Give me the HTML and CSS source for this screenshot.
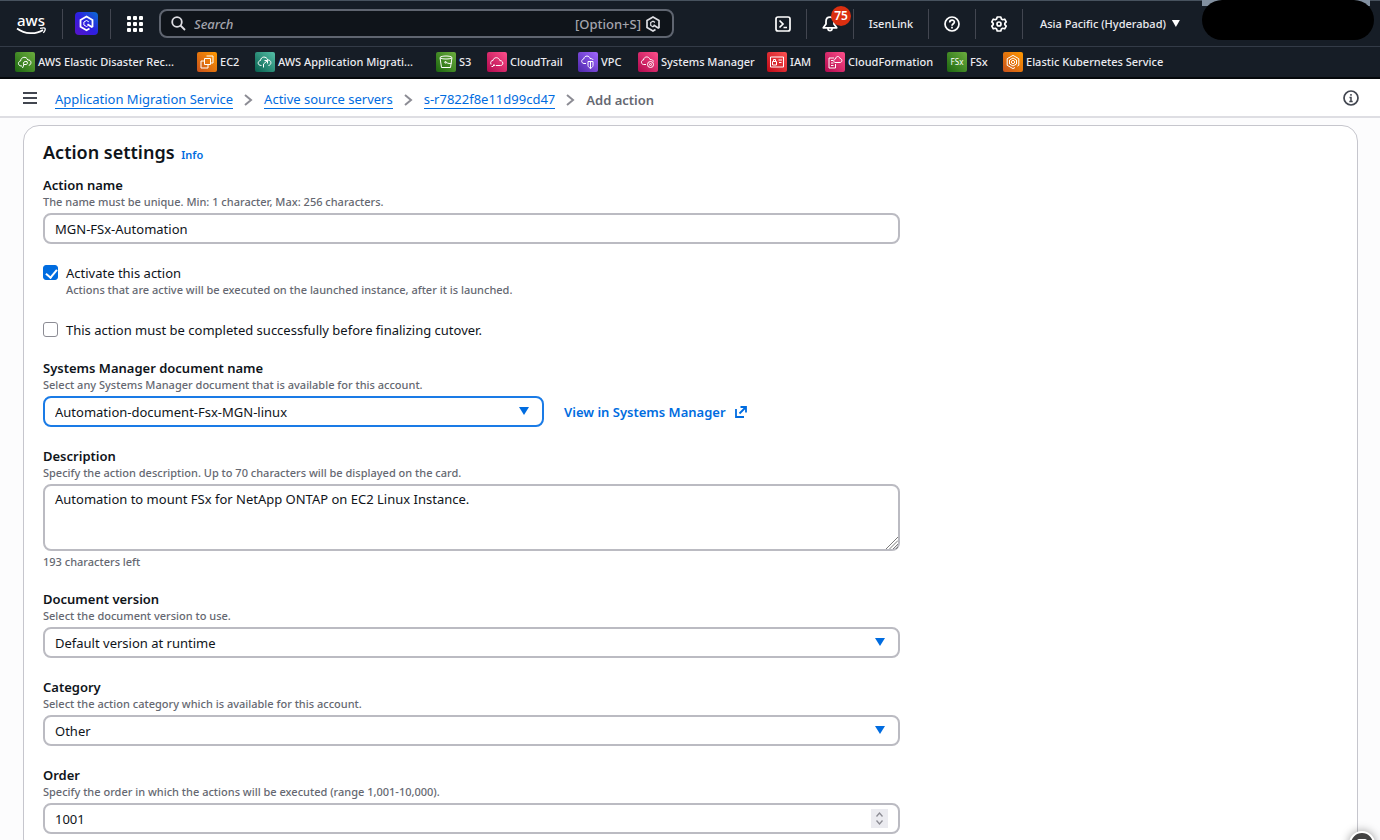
FILE: index.html
```html
<!DOCTYPE html>
<html lang="en">
<head>
    <meta charset="UTF-8">
    <meta name="viewport" content="width=device-width, initial-scale=1.0">
    <title>Add action | Application Migration Service</title>
    <link rel="stylesheet" href="styles.css">
</head>
<body>
    <header>
        <!-- Top navigation -->
        <div class="topnav">
            <a href="#" class="logo" aria-label="AWS home">
                <svg width="32" height="30" viewBox="0 0 32 30">
                    <text x="15" y="17" text-anchor="middle" class="logo-text">aws</text>
                    <path d="M1 19.500C9 25.500 20 25.500 27 21" fill="none" stroke="#fff" stroke-width="1.700"/>
                    <path d="M24 19.300c2.500-.6 4.600-.6 5 0 .4.600-.2 2.700-1.700 4.500" fill="none" stroke="#fff" stroke-width="1.300"/>
                </svg>
            </a>
            <a href="#" class="nav-cell assistant" aria-label="Amazon Q">
                <svg width="23" height="23" viewBox="0 0 23 23">
                    <defs>
                        <linearGradient id="q" x1="1" y1="0" x2="0" y2="1">
                            <stop offset="0" stop-color="#0a6fd0"/>
                            <stop offset=".5" stop-color="#2d1fe0"/>
                            <stop offset="1" stop-color="#5a12c8"/>
                        </linearGradient>
                    </defs>
                    <rect width="23" height="23" rx="4" fill="url(#q)"/>
                    <path d="M14.500 16.500l-3 1.700L5.500 14.700V8l6-3.500 6 3.500v6.500l-.8.5-4.200-2.800" fill="none" stroke="#fff" stroke-width="1.800"/>
                    <path d="M13.800 9.800l-2.300-1.300-2.600 1.500v3l2.600 1.500 1.200-.6" fill="none" stroke="#fff" stroke-width="1"/>
                </svg>
            </a>
            <button class="services" aria-label="Services">
                <svg width="16" height="16" viewBox="0 0 16 16" fill="#fff">
                    <rect x="0" y="0" width="4" height="4" rx="1"/><rect x="6" y="0" width="4" height="4" rx="1"/><rect x="12" y="0" width="4" height="4" rx="1"/>
                    <rect x="0" y="6" width="4" height="4" rx="1"/><rect x="6" y="6" width="4" height="4" rx="1"/><rect x="12" y="6" width="4" height="4" rx="1"/>
                    <rect x="0" y="12" width="4" height="4" rx="1"/><rect x="6" y="12" width="4" height="4" rx="1"/><rect x="12" y="12" width="4" height="4" rx="1"/>
                </svg>
            </button>
            <div class="search">
                <svg width="15" height="15" viewBox="0 0 15 15" fill="none" stroke="#dedee3" stroke-width="1.800">
                    <circle cx="6" cy="6" r="4.800"/><path d="M9.500 9.500l4.500 4.500"/>
                </svg>
                <input type="text" placeholder="Search" aria-label="Search">
                <span class="shortcut">[Option+S]</span>
                <svg width="14" height="16" viewBox="0 0 14 16" fill="none" stroke="#dedee3">
                    <path d="M9.500 13.500L7 15 1 11.500v-7L7 1l6 3.500v7l-.8.5L7.500 9" stroke-width="1.700"/>
                    <path d="M9 6.400L7 5.300 4.700 6.600v2.800L7 10.700l1-.6" stroke-width="1.200"/>
                </svg>
            </div>
            <div class="nav-right">
                <button class="nav-cell" aria-label="CloudShell">
                    <svg width="16" height="16" viewBox="0 0 16 16" fill="none" stroke="#fff" stroke-width="1.700">
                        <rect x="1" y="1" width="14" height="14" rx="2"/><path d="M4.500 4.500L8 8l-3.500 3.500M8.500 11.500H12"/>
                    </svg>
                </button>
                <button class="nav-cell" aria-label="Notifications">
                    <svg width="16" height="16" viewBox="0 0 16 16" fill="none" stroke="#fff" stroke-width="1.800" stroke-linejoin="round">
                        <path d="M8 1.200C5.500 1.200 4 3 4 5.500V8L1.300 11.800h13.400L12 8V5.500C12 3 10.500 1.200 8 1.200zM5.800 12c.2 3.600 4.200 3.600 4.400 0"/>
                    </svg>
                    <span class="badge">75</span>
                </button>
                <button class="nav-cell user">IsenLink</button>
                <button class="nav-cell" aria-label="Help">
                    <svg width="16" height="16" viewBox="0 0 16 16" fill="none" stroke="#fff" stroke-width="1.700">
                        <circle cx="8" cy="8" r="7"/><path d="M5.700 6.500C5.700 3.300 10.400 3.500 10.400 6.100 10.400 7.800 8 7.700 8 9.800M8 10.800v1.700"/>
                    </svg>
                </button>
                <button class="nav-cell" aria-label="Settings">
                    <svg width="16" height="16" viewBox="0 0 16 16" fill="none" stroke="#fff" stroke-width="1.700" stroke-linejoin="round">
                        <path d="M6.200 1h3.600l.6 2 1.300.7 2-.5 1.500 2.600L13.800 7.300v1.400l1.400 1.500-1.500 2.600-2-.5-1.300.7-.6 2H6.200l-.6-2-1.300-.7-2 .5L.8 10.200l1.400-1.500V7.300L.8 5.800l1.500-2.600 2 .5L5.600 3z"/>
                        <circle cx="8" cy="8" r="2"/>
                    </svg>
                </button>
                <button class="nav-cell region">Asia Pacific (Hyderabad) <i class="caret"></i></button>
                <div class="account"></div>
            </div>
        </div>

        <!-- Favorite services -->
        <nav class="favorites">
            <a href="#">
                <svg class="green" viewBox="0 0 20 20"><path d="M7 14H6c-3.500-.5-3.200-4.600-.4-5C6 4.500 11.500 4 12.800 8c3.600-.5 4.400 4.500 1 5.400M12 9.500c-3-.5-4 1-3.500 3h3c1 0 1-3 .5-3zM9 12.500L7.500 16"/></svg>
                AWS Elastic Disaster Rec...
            </a>
            <a href="#">
                <svg class="orange" viewBox="0 0 20 20"><path d="M7.500 6.500h6v6h-6zM9.500 4H16v7h-2.500M7.500 9H4v7h7v-3.500"/></svg>
                EC2
            </a>
            <a href="#">
                <svg class="teal" viewBox="0 0 20 20"><path d="M6.500 13.500c-4.500 0-4-4.500-1-5C6 4 11.500 4 12.800 8c3.800-.3 4.200 5 .7 5.500M8.500 15.500V12l4-3.500M9.500 8.500h3v3"/></svg>
                AWS Application Migrati...
            </a>
            <a href="#">
                <svg class="green" viewBox="0 0 20 20"><path d="M4 5.500l1.500 10h9l1.500-10M4 5.500c1-2 11-2 12 0-1 2-11 2-12 0M9.500 10.300c2 1 6.500 2 6 .5"/><circle cx="9.500" cy="10.300" r=".8"/></svg>
                S3
            </a>
            <a href="#">
                <svg class="pink" viewBox="0 0 20 20"><path d="M4 12.500C3 9.500 4.500 8.500 6 8.500 6.800 4.500 12 5 12.800 8.500c3.700 0 4.200 5 .7 5H9M4.500 14.500H6l1-2 1 1.500"/></svg>
                CloudTrail
            </a>
            <a href="#">
                <svg class="purple" viewBox="0 0 20 20"><path d="M8 11.500H6c-3-.3-3-4-.3-4.500C6.500 3 11.500 3.300 12 6.500c2.500 0 3 1 3 1.500M10 9.500h5v4c0 1.500-2.500 3-2.500 3s-2.500-1.500-2.500-3zM12.500 9.500v7"/></svg>
                VPC
            </a>
            <a href="#">
                <svg class="pink" viewBox="0 0 20 20"><path d="M8 12.500H5.500c-3-.5-2.500-4.500 0-4.500C6 4 11 4 12 7.500c2.500 0 3.300 1 3.500 2"/><circle cx="12.500" cy="12.500" r="3"/><circle cx="12.500" cy="12.500" r="1"/></svg>
                Systems Manager
            </a>
            <a href="#">
                <svg class="red" viewBox="0 0 20 20"><path d="M3.500 5h13v10h-13zM5.500 9.500h4V13h-4zM6.500 9.500V7.500h2v2M11.500 8H15M12 10.500h2.500"/></svg>
                IAM
            </a>
            <a href="#">
                <svg class="pink" viewBox="0 0 20 20"><path d="M9 6H4v10h6.500v-4M6 8.500h2M6 11h2.500M6 13.500h2.500M10 10.500c-2-.5-1.500-3.500.5-3.500C11 3.500 14.500 4 15 6.500c2.500 0 2.500 4 0 4z"/></svg>
                CloudFormation
            </a>
            <a href="#">
                <svg class="green" viewBox="0 0 20 20"><text x="10" y="13" text-anchor="middle">FSx</text></svg>
                FSx
            </a>
            <a href="#">
                <svg class="orange" viewBox="0 0 20 20"><path d="M12 15.500L10 16.600 4.200 13.300V6.700L10 3.400l5.800 3.300v6.600l-1.300.8M10 6l3.500 2v4L10 14l-3.500-2V8zM10 8.300L8.500 9.200v1.800l1.500.9 1.500-.9V9.200z"/></svg>
                Elastic Kubernetes Service
            </a>
        </nav>
    </header>

    <!-- Breadcrumb bar -->
    <div class="crumb-bar">
        <button class="menu" aria-label="Open navigation">
            <svg width="14" height="12" viewBox="0 0 14 12" stroke="#424650" stroke-width="2"><path d="M0 1h14M0 6h14M0 11h14"/></svg>
        </button>
        <nav class="crumbs">
            <a href="#">Application Migration Service</a>
            <svg width="9" height="12" viewBox="0 0 9 12"><path d="M1 1l6 5-6 5"/></svg>
            <a href="#">Active source servers</a>
            <svg width="9" height="12" viewBox="0 0 9 12"><path d="M1 1l6 5-6 5"/></svg>
            <a href="#">s-r7822f8e11d99cd47</a>
            <svg width="9" height="12" viewBox="0 0 9 12"><path d="M1 1l6 5-6 5"/></svg>
            <span>Add action</span>
        </nav>
        <button class="info-toggle" aria-label="Open help panel">
            <svg width="16" height="16" viewBox="0 0 16 16" fill="none" stroke="#424650" stroke-width="1.700"><circle cx="8" cy="8" r="7"/><path d="M8 4v1.700M6.500 7.500H8V11.500M6.300 11.500h3.400" stroke-width="1.500"/></svg>
        </button>
    </div>

    <main>
        <form class="card">
            <h2>Action settings <a href="#">Info</a></h2>

            <div class="field">
                <label for="action-name">Action name</label>
                <p class="hint">The name must be unique. Min: 1 character, Max: 256 characters.</p>
                <input type="text" id="action-name" class="control" value="MGN-FSx-Automation">
            </div>

            <div class="check">
                <input type="checkbox" id="activate" checked>
                <div>
                    <label for="activate">Activate this action</label>
                    <p class="hint">Actions that are active will be executed on the launched instance, after it is launched.</p>
                </div>
            </div>

            <div class="check">
                <input type="checkbox" id="must-complete">
                <label for="must-complete">This action must be completed successfully before finalizing cutover.</label>
            </div>

            <div class="field">
                <label for="document">Systems Manager document name</label>
                <p class="hint">Select any Systems Manager document that is available for this account.</p>
                <div class="document-row">
                    <div class="select focused">
                        <select id="document" class="control">
                            <option>Automation-document-Fsx-MGN-linux</option>
                        </select>
                    </div>
                    <a href="#" class="external">View in Systems Manager
                        <svg width="12" height="12" viewBox="0 0 12 12" fill="none" stroke="#006ce0" stroke-width="1.800"><path d="M1 3v8h8M5.500 1H11v5.500M11 1L4.500 7.500"/></svg>
                    </a>
                </div>
            </div>

            <div class="field">
                <label for="description">Description</label>
                <p class="hint">Specify the action description. Up to 70 characters will be displayed on the card.</p>
                <div class="area">
                    <textarea id="description" class="control">Automation to mount FSx for NetApp ONTAP on EC2 Linux Instance.</textarea>
                    <svg width="12" height="12" viewBox="0 0 12 12" stroke="#7b7b7b"><path d="M0 12L12 0M3.500 12L12 3.500M7 12l5-5M10 12l2-2"/></svg>
                </div>
                <p class="hint">193 characters left</p>
            </div>

            <div class="field">
                <label for="version">Document version</label>
                <p class="hint">Select the document version to use.</p>
                <div class="select">
                    <select id="version" class="control">
                        <option>Default version at runtime</option>
                    </select>
                </div>
            </div>

            <div class="field">
                <label for="category">Category</label>
                <p class="hint">Select the action category which is available for this account.</p>
                <div class="select">
                    <select id="category" class="control">
                        <option>Other</option>
                    </select>
                </div>
            </div>

            <div class="field">
                <label for="order">Order</label>
                <p class="hint">Specify the order in which the actions will be executed (range 1,001-10,000).</p>
                <div class="number">
                    <input type="number" id="order" class="control" min="1001" max="10000" value="1001">
                    <svg width="17" height="19" viewBox="0 0 17 19"><rect width="17" height="19" fill="#ebebf0"/><path d="M5.500 7.500l3-3.500 3 3.500M5.500 11.500l3 3.500 3-3.500" fill="none" stroke="#8c8c94" stroke-width="1.300"/></svg>
                </div>
            </div>
        </form>
    </main>

    <button class="capture" aria-label="Recorder">
        <svg width="10" height="10" viewBox="0 0 10 10"><rect width="10" height="10" rx="2" fill="#fff"/></svg>
    </button>
</body>
</html>
```
FILE: styles.css
```css
* {
    box-sizing: border-box;
}

body {
    margin: 0;
    height: 100vh;
    display: flex;
    flex-direction: column;
    overflow: hidden;
    background-color: #fcfcfd;
    color: #0f141a;
    font-family: "Noto Sans", "Open Sans", sans-serif;
    font-size: 13px;
    line-height: 18px;
}

a {
    color: #006ce0;
    text-decoration: none;
}

button {
    padding: 0;
    border: none;
    background: none;
    font: inherit;
    color: inherit;
    cursor: pointer;
}

svg {
    display: block;
    flex: none;
}

/* Header */
header {
    background-color: #161d26;
    border-top: 1px solid #47525e;
    border-bottom: 2px solid #05080b;
    color: #ebebf0;
    font-size: 11px;
    font-weight: 500;
}

.topnav {
    display: flex;
    align-items: center;
    height: 46px;
    padding-left: 16px;
    border-bottom: 1px solid #333b47;
}

.logo {
    width: 46px;
}

.logo-text {
    fill: #fff;
    font-size: 15px;
    font-weight: 500;
}

.nav-cell {
    position: relative;
    display: flex;
    align-items: center;
    justify-content: center;
    width: 47px;
    height: 30px;
    border-right: 1px solid #424650;
}

.assistant {
    width: 49px;
    border-left: 1px solid #424650;
}

.services {
    margin: 0 16px;
}

.search {
    display: flex;
    align-items: center;
    gap: 8px;
    flex: 1;
    max-width: 515px;
    height: 29px;
    padding: 0 12px 0 10px;
    border: 2px solid #5f6570;
    border-radius: 8px;
    background-color: #0f141a;
}

.search input {
    flex: 1;
    min-width: 0;
    padding: 0;
    border: none;
    outline: none;
    background: none;
    color: #fff;
    font: inherit;
    font-size: 13px;
}

.search input::placeholder {
    color: #a4a4ad;
    font-style: italic;
}

.shortcut {
    color: #a4a4ad;
    font-size: 13px;
    margin-right: -3px;
}

.nav-right {
    display: flex;
    align-items: center;
    height: 100%;
    margin-left: auto;
    padding-right: 6px;
}

.badge {
    position: absolute;
    top: -3px;
    right: 2px;
    width: 20px;
    height: 20px;
    border-radius: 50%;
    background-color: #db2f10;
    color: #fff;
    font-size: 12px;
    font-weight: 600;
    line-height: 20px;
}

.user {
    width: 75px;
}

.nav-cell.region {
    width: 179px;
    padding-left: 17px;
    justify-content: flex-start;
    gap: 6px;
    border: none;
}

.caret {
    width: 8px;
    height: 7px;
    background-color: #fff;
    clip-path: polygon(0 0, 100% 0, 50% 100%);
}

.account {
    align-self: flex-start;
    width: 172px;
    margin-top: -1px;
    background: linear-gradient(#8290a0, #8290a0) no-repeat 0 0 / 168px 6px;
}

.account::before {
    content: "";
    display: block;
    height: 40px;
    border-radius: 20px;
    background-color: #000;
}

.favorites {
    display: grid;
    grid-template-columns: 182px 58px 181px 51px 91px 60px 129px 58px 122px 56px auto;
    height: 30px;
    padding-left: 15px;
}

.favorites a {
    display: flex;
    align-items: center;
    gap: 3px;
    color: #ebebf0;
    white-space: nowrap;
}

.favorites svg {
    width: 20px;
    height: 20px;
    border-radius: 2px;
    fill: none;
    stroke: #fff;
}

.favorites text {
    fill: #fff;
    stroke: none;
    font-size: 8px;
    font-weight: 400;
}

.green { background: linear-gradient(45deg, #1b660f, #6cae3e); }
.orange { background: linear-gradient(45deg, #c8511b, #ff9900); }
.teal { background: linear-gradient(45deg, #055f4e, #56c0a7); }
.pink { background: linear-gradient(45deg, #b0084d, #ff4f8b); }
.purple { background: linear-gradient(45deg, #4d27aa, #a166ff); }
.red { background: linear-gradient(45deg, #bd0816, #ff5252); }

/* Breadcrumbs */
.crumb-bar {
    display: flex;
    align-items: center;
    height: 39px;
    padding: 0 21px 0 23px;
    border-bottom: 2px solid #dedee3;
    background-color: #fff;
}

.crumbs {
    display: flex;
    align-items: center;
    gap: 11px;
    margin: 5px auto 0 18px;
    line-height: 17px;
}

.crumbs a {
    border-bottom: 1px solid #006ce0;
}

.crumbs svg {
    fill: none;
    stroke: #8c8c94;
    stroke-width: 2;
}

.crumbs span {
    color: #656871;
    font-weight: 600;
}

/* Form */
main {
    flex: 1;
    padding: 7px 22px 20px 23px;
    overflow-y: auto;
    scrollbar-width: none;
}

.card {
    display: flex;
    flex-direction: column;
    gap: 20px;
    padding: 14px 19px 20px;
    border: 1px solid #c6c6cd;
    border-radius: 16px;
    background-color: #fff;
}

h2 {
    margin: 0 0 -11px;
    font-size: 18px;
    line-height: 24px;
    font-weight: 600;
}

h2 a {
    margin-left: 2px;
    font-size: 11px;
}

.field {
    max-width: 857px;
}

.field label {
    display: block;
    font-weight: 600;
}

.hint {
    margin: 0;
    color: #656871;
    font-size: 11px;
    font-weight: 500;
    line-height: 16px;
}

.hint + *, .area + .hint {
    margin-top: 3px;
}

.control {
    display: block;
    width: 100%;
    height: 31px;
    padding: 0 10px;
    border: 2px solid #bbbbc2;
    border-radius: 8px;
    outline: none;
    background-color: #fff;
    color: #0f141a;
    font: inherit;
    appearance: none;
}

textarea.control {
    height: 67px;
    padding: 4px 10px;
    resize: none;
}

input[type="number"] {
    appearance: textfield;
}

.select, .area, .number {
    position: relative;
}

.select::after {
    content: "";
    position: absolute;
    top: 11px;
    right: 15px;
    width: 10px;
    height: 8px;
    background-color: #006ce0;
    clip-path: polygon(0 0, 100% 0, 50% 100%);
    pointer-events: none;
}

.focused .control {
    border-color: #1a7be6;
}

.area svg {
    position: absolute;
    right: 2px;
    bottom: 2px;
}

.number svg {
    position: absolute;
    right: 12px;
    bottom: 6px;
}

.document-row {
    display: flex;
    align-items: center;
    gap: 20px;
}

.document-row .select {
    flex: 0 1 501px;
}

.external {
    display: flex;
    align-items: center;
    gap: 9px;
    font-weight: 600;
}

.check {
    display: flex;
    align-items: flex-start;
    gap: 8px;
}

.check + .check {
    margin-top: 3px;
}

.check input {
    position: relative;
    flex: none;
    width: 15px;
    height: 15px;
    margin: 1px 0 0;
    border: 1px solid #8c8c94;
    border-radius: 3px;
    background-color: #fff;
    appearance: none;
}

.check input:checked {
    border-color: #006ce0;
    background-color: #006ce0;
}

.check input:checked::after {
    content: "";
    position: absolute;
    top: 1px;
    left: 4px;
    width: 5px;
    height: 9px;
    border: solid #fff;
    border-width: 0 2px 2px 0;
    transform: rotate(40deg);
}

/* Floating recorder button */
.capture {
    position: fixed;
    right: 5px;
    bottom: -17px;
    display: flex;
    justify-content: center;
    width: 26px;
    height: 26px;
    padding-top: 6px;
    border: 2px solid #fff;
    border-radius: 50%;
    background-color: #424242;
    box-shadow: 0 0 10px rgba(0, 0, 0, 0.4);
}
```
